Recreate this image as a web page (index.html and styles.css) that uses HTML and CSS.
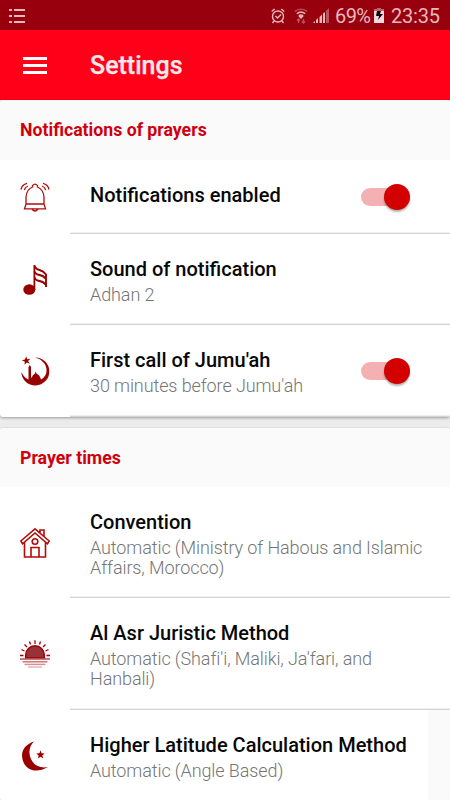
FILE: index.html
```html
<!DOCTYPE html>
<html lang="en">
<head>
<meta charset="utf-8">
<title>Settings</title>
<link rel="stylesheet" href="styles.css">
</head>
<body>
<div class="status">
  <svg class="list" width="16" height="16" viewBox="0 0 16 16"><path d="M0 2h3M5 2h11M0 8h3M5 8h11M0 14h3M5 14h11"/></svg>
  <div class="indicators">
    <svg class="alarm" width="14" height="16" viewBox="0 0 14 16"><circle cx="7" cy="8.5" r="5.5"/><path d="M.7 3.5l3-2.5M13.3 3.5l-3-2.5M3 13l-1.5 2M11 13l1.5 2M4.5 8l2 2 3.5-3.5"/></svg>
    <svg class="wifi" width="14" height="16" viewBox="0 0 14 16"><path class="dim" d="M.7 3.5Q7-1.3 13.3 3.5"/><path d="M2.8 5.8Q7 2.2 11.2 5.8M4.8 8Q7 6 9.2 8"/><path class="fill" d="M5.8 8.6h2.4L7 10z"/><path class="dim" d="M4.5 15v-4M3 12.5L4.5 11 6 12.5M9.5 11v4M8 13.5L9.500 15l1.5-1.5"/></svg>
    <svg class="signal" width="16" height="15" viewBox="0 0 16 15"><path d="M0 15l2-2v2zM3 12l2-2v5H3zM6.500 9l2.500-2.500V15H6.500zM10 5.500L12 4v11h-2z"/><path class="dim" d="M13 3l3-3v15h-3z"/></svg>
    <span class="percent">69%</span>
    <svg class="battery" width="10" height="15" viewBox="0 0 10 15"><path class="dim" d="M3 0h4v1h3v3H0V1h3z"/><path d="M0 3h10v12H0z"/><path class="bolt" d="M3 3h4L6 6h3l-5 6 1-4H2z"/></svg>
    <span class="clock">23:35</span>
  </div>
</div>
<header class="appbar">
  <div class="menu"><i></i><i></i><i></i></div>
  <h1>Settings</h1>
</header>
<main>
  <section class="card">
    <h2>Notifications of prayers</h2>
    <div class="row short">
      <svg class="icon line" viewBox="0 0 30 30"><path d="M6 22V15Q6.500 7.500 12.500 5V3.700Q15 .7 17.500 3.700V5Q23.500 7.500 24 15V22M6 22L4.500 26.800H25.500L24 22ZM12 27Q15 31 18 27M1 7.500Q2 2.500 7 1.300M4.300 8Q5 5 8 4M29 7.500Q28 2.500 23 1.300M25.700 8Q25 5 22 4"/></svg>
      <div class="text"><h3>Notifications enabled</h3></div>
      <div class="switch"><i></i></div>
    </div>
    <div class="row">
      <svg class="icon" viewBox="0 0 30 30"><ellipse cx="9.300" cy="24.500" rx="6" ry="5.300"/><path d="M13.500 0h1.800v25h-1.800z"/><path class="flags" d="M14.500 1Q15.500 4 19.500 5T26 9.500V22M14.500 6.500Q15.500 9.500 19.500 10T26 14M14.500 12.500Q15.500 15.500 19.500 16T26 20"/></svg>
      <div class="text"><h3>Sound of notification</h3><p>Adhan 2</p></div>
    </div>
    <div class="row third">
      <svg class="icon" viewBox="0 0 30 30"><path d="M15 1.500A14 14 0 1 1 1.300 16C4 21 6 22.500 8.500 23.500V11l1.300-2 1.200 2V22l1-1Q12.500 19 15 17.500L15.800 15.500 16.500 17.500Q19.500 19 20 21L21 23.500Q27 20 26.500 13.500C26 7 21 3 15 1.500Z"/><path d="M6.200 0.300L7.200 3.200 10.400 2.700 8.100 4.900 9.800 7.700 6.700 6.400 4.600 8.800 4.700 5.600 1.700 4.300 4.900 3.500Z"/></svg>
      <div class="text"><h3>First call of Jumu'ah</h3><p>30 minutes before Jumu'ah</p></div>
      <div class="switch"><i></i></div>
    </div>
  </section>
  <section class="card second">
    <h2>Prayer times</h2>
    <div class="row tall">
      <svg class="icon line house" viewBox="0 0 30 30"><path d="M4.500 14V29H25.500V14M11 29V19.500H19V29M15 .9L.8 13 2.500 15.800 15 5 27.500 15.800 29.200 13ZM20 5V2H24V8.500"/><circle cx="15" cy="13.500" r="2.800"/></svg>
      <div class="text"><h3>Convention</h3><p>Automatic (Ministry of Habous and Islamic<br>Affairs, Morocco)</p></div>
    </div>
    <div class="row taller">
      <svg class="icon sun" viewBox="0 0 30 30"><path class="disc" d="M5.700 19V16A9.300 9.300 0 0 1 24.300 16V19Z"/><path class="rays" d="M0 16.500H3.500M26.500 16.500H30M1.500 10.500L4.500 12M28.500 10.500L25.500 12M4.500 5.500L7 8M25.500 5.500L23 8M9.500 2.500L10.500 5.500M20.500 2.500L19.500 5.500M15 1.200V5"/><path class="water" d="M0 20H30"/><path class="water w2" d="M2.500 22.800H27.500"/><path class="water w3" d="M4.500 25.400H25.500"/><path class="water w4" d="M8 28H22"/></svg>
      <div class="text"><h3>Al Asr Juristic Method</h3><p>Automatic (Shafi'i, Maliki, Ja'fari, and<br>Hanbali)</p></div>
    </div>
    <div class="row last">
      <svg class="icon" viewBox="0 0 30 30"><path d="M14 .5C4 4 0 11 3 20S16 33 28 26C21 27.500 14 25 11 18S9.500 5 14 .5Z"/><path d="M20.500 9.300L21.600 12.300 24.700 12.400 22.300 14.400 23.200 17.500 20.500 15.800 17.800 17.500 18.700 14.400 16.300 12.400 19.400 12.300Z"/></svg>
      <div class="text"><h3>Higher Latitude Calculation Method</h3><p>Automatic (Angle Based)</p></div>
      <div class="edge"></div>
    </div>
  </section>
</main>
</body>
</html>
```
FILE: styles.css
```css
* { box-sizing: border-box; }
body { margin: 0; width: 450px; height: 800px; overflow: hidden; background: #ececec; font-family: Roboto, sans-serif; }
h1, h2, h3, p { margin: 0; }
svg { display: block; flex: none; }

.status { height: 30px; background: #99000d; color: #e6b9be; display: flex; align-items: center; justify-content: space-between; padding: 1px 10px 0 9px; }
.indicators { display: flex; align-items: center; font-size: 20px; line-height: 30px; }
.list, .alarm, .wifi { fill: none; stroke: #e6b9be; }
.list { stroke-width: 2; }
.alarm, .wifi { stroke-width: 1.4; }
.alarm { margin-right: 9px; }
.wifi { margin-right: 5px; }
.wifi .fill { fill: #e6b9be; }
.signal { fill: #e6b9be; margin-right: 6px; }
.dim { opacity: .45; }
.percent { width: 39px; letter-spacing: -.6px; white-space: nowrap; }
.battery { fill: #f0dadd; margin-right: 7px; }
.battery .bolt { fill: #17080a; }
.clock { width: 49px; letter-spacing: -.2px; }

.appbar { height: 70px; background: #ff0018; display: flex; align-items: center; padding-left: 23px; }
.menu { width: 24px; height: 17px; display: flex; flex-direction: column; justify-content: space-between; margin-right: 43px; }
.menu i { height: 3px; background: #fff; }
h1 { font-size: 25px; font-weight: 500; line-height: 30px; color: #f5e9ec; padding-top: 2px; -webkit-text-stroke: .25px #f5e9ec; }

.card { background: #fff; border-radius: 3px; box-shadow: 0 1px 3px rgba(0, 0, 0, .35); overflow: hidden; }
.second { margin-top: 11px; }
h2 { height: 60px; line-height: 61px; padding-left: 20px; background: #fafafa; color: #d0000c; font-size: 17.7px; font-weight: 700; }
.second h2 { height: 59px; }
.row { height: 91px; display: grid; grid-template-columns: 70px 1fr; position: relative; }
.row.short { height: 74px; }
.row.third { height: 92px; }
.row.tall { height: 111px; }
.row.taller { height: 112px; }
.text { border-bottom: 1px solid #d4d4d4; box-shadow: inset 0 -1px #f0f0f0; padding: 22px 0 0 20px; white-space: nowrap; }
.last .text { border: 0; box-shadow: none; }
h3 { font-size: 20px; font-weight: 500; line-height: 26px; color: #080808; }
p { margin-top: 3px; font-size: 18px; font-weight: 300; line-height: 20px; letter-spacing: -.1px; color: #757575; }
.icon { width: 30px; height: 30px; align-self: center; margin-left: 20px; fill: #990000; }
.line { fill: none; stroke: #b20c0c; stroke-width: 1.3; }
.house { stroke-width: 1.6; }
.flags { fill: none; stroke: #990000; stroke-width: 1.9; }
.last .flags { fill: #990000; }
.row .flags { fill: none; }
.disc { fill: #963238; stroke: #a20007; stroke-width: 1.5; }
.rays { fill: none; stroke: #a20007; stroke-width: 1.3; }
.water { fill: none; stroke: #b94a50; stroke-width: 1.5; }
.w2 { opacity: .75; }
.w3 { opacity: .6; }
.w4 { opacity: .4; }
.switch { position: absolute; right: 40px; top: 28px; width: 49px; height: 18px; border-radius: 9px; background: #f3b1b3; }
.switch i { position: absolute; right: 0; top: -4px; width: 26px; height: 26px; border-radius: 50%; background: #d20000; box-shadow: 0 2px 2px rgba(0, 0, 0, .3); }
.row.third .switch { top: 37px; }
.edge { position: absolute; right: 0; top: 0; width: 22px; height: 91px; background: #fafafa; }
```
